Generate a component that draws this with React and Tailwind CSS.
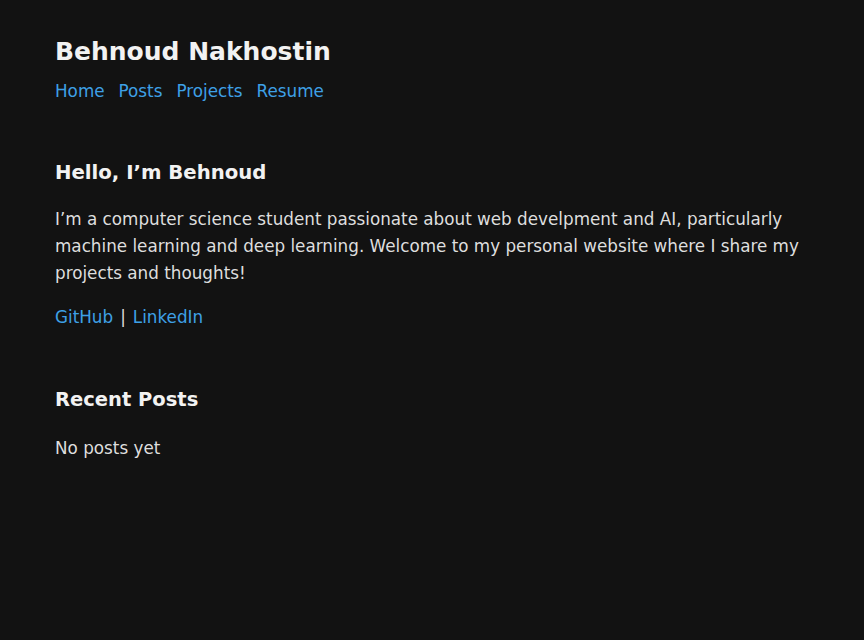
export default function App() {
  const font = { fontFamily: '"DejaVu Sans", Verdana, sans-serif' };
  return (
    <div className="min-h-[640px] bg-[#121212] text-[#dedede]" style={font}>
      <div className="px-[55px] pt-[34px] max-w-[864px]">
        <header>
          <h1 className="text-[25px] font-bold leading-[36px] text-[#f2f2f2]">Behnoud Nakhostin</h1>
          <nav className="mt-[8px] flex gap-[14px] text-[16.8px] leading-[26px] text-[#3ea0e6]">
            <a href="#">Home</a>
            <a href="#">Posts</a>
            <a href="#">Projects</a>
            <a href="#">Resume</a>
          </nav>
        </header>
        <section className="mt-[55px]">
          <h2 className="text-[19.7px] font-bold leading-[28px] text-[#f2f2f2]">Hello, I’m Behnoud</h2>
          <p className="mt-[19px] text-[16.8px] leading-[27px]">
            I’m a computer science student passionate about web develpment and AI, particularly machine learning and deep learning. Welcome to my personal website where I share my projects and thoughts!
          </p>
          <p className="mt-[17px] flex gap-[7px] text-[16.8px] leading-[27px]">
            <a href="#" className="text-[#3ea0e6]">GitHub</a>
            <span>|</span>
            <a href="#" className="text-[#3ea0e6]">LinkedIn</a>
          </p>
        </section>
        <section className="mt-[55px]">
          <h2 className="text-[19.5px] font-bold leading-[28px] text-[#f2f2f2]">Recent Posts</h2>
          <p className="mt-[21px] text-[16.8px] leading-[27px]">No posts yet</p>
        </section>
      </div>
    </div>
  );
}
